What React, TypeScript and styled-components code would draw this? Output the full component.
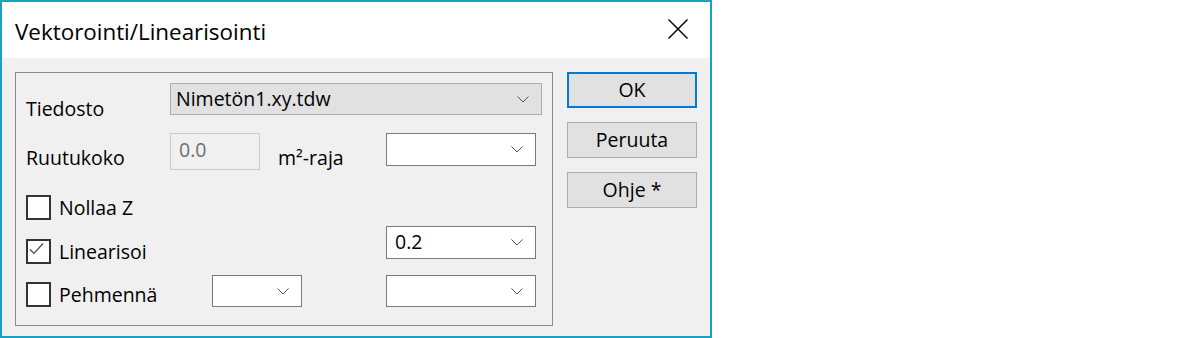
import React from "react";
import styled, { createGlobalStyle, css } from "styled-components";

const FONT = `"Segoe UI", "Open Sans", sans-serif`;

const Global = createGlobalStyle`
  html, body { margin: 0; padding: 0; background: #ffffff; }
  body { font-family: ${FONT}; }
  * { box-sizing: border-box; }
`;

const Window = styled.div`
  width: 712px;
  height: 338px;
  border: 2px solid #1ba1c4;
  display: flex;
  flex-direction: column;
  background: #f0f0f0;
  font-family: ${FONT};
  font-size: 19.5px;
  color: #000;
`;

const TitleBar = styled.div`
  flex: none;
  height: 56px;
  background: #ffffff;
  display: flex;
  align-items: flex-start;
  padding: 0 22px 0 13px;
`;

const Title = styled.div`
  margin-top: 15px;
  line-height: 30px;
  font-size: 22.4px;
  white-space: nowrap;
`;

const CloseButton = styled.div`
  margin-left: auto;
  margin-top: 17px;
  width: 20px;
  height: 20px;
  display: flex;
`;

const Body = styled.div`
  flex: 1;
  display: flex;
  align-items: flex-start;
  padding: 14px 0 0 13px;
`;

const GroupBox = styled.div`
  width: 538px;
  height: 254px;
  border: 1px solid #8c8c8c;
  padding: 10px 0 0 10px;
  display: flex;
  flex-direction: column;
`;

const Row = styled.div<{ $h: number }>`
  height: ${(p) => p.$h}px;
  display: flex;
  align-items: flex-start;
`;

const Label = styled.div<{ $w?: number; $dy?: number; $ml?: number }>`
  width: ${(p) => (p.$w ? `${p.$w}px` : "auto")};
  margin-top: ${(p) => p.$dy ?? 0}px;
  margin-left: ${(p) => p.$ml ?? 0}px;
  line-height: 26px;
  white-space: nowrap;
`;

const ComboBox = styled.div<{
  $w: number;
  $h: number;
  $ml?: number;
  $padL?: number;
  $readonly?: boolean;
}>`
  width: ${(p) => p.$w}px;
  height: ${(p) => p.$h}px;
  margin-left: ${(p) => p.$ml ?? 0}px;
  display: flex;
  align-items: center;
  padding: 0 12px 0 ${(p) => p.$padL ?? 8}px;
  ${(p) =>
    p.$readonly
      ? css`
          background: #e1e1e1;
          border: 1px solid #adadad;
        `
      : css`
          background: #ffffff;
          border: 1px solid #7a7a7a;
        `}
`;

const ComboText = styled.span`
  flex: 1;
  line-height: 26px;
  white-space: nowrap;
`;

const Chevron = styled.svg`
  flex: none;
  width: 12px;
  height: 7px;
`;

const EditBox = styled.div<{ $w: number; $h: number }>`
  width: ${(p) => p.$w}px;
  height: ${(p) => p.$h}px;
  border: 1px solid #cccccc;
  background: #f0f0f0;
  color: #6d6d6d;
  padding: 3px 0 0 8px;
  line-height: 26px;
`;

const CheckItem = styled.div<{ $w: number; $dy: number }>`
  width: ${(p) => p.$w}px;
  margin-top: ${(p) => p.$dy}px;
  display: flex;
  align-items: flex-start;
  gap: 8px;
`;

const CheckBox = styled.div`
  flex: none;
  width: 25px;
  height: 25px;
  border: 2px solid #333333;
  background: #ffffff;
  display: flex;
`;

const CheckLabel = styled.span`
  line-height: 26px;
  white-space: nowrap;
`;

const ButtonColumn = styled.div`
  margin-left: 14px;
  width: 130px;
  display: flex;
  flex-direction: column;
  gap: 14px;
`;

const Button = styled.div<{ $default?: boolean }>`
  height: 36px;
  background: #e1e1e1;
  border: ${(p) => (p.$default ? "2px solid #0078d7" : "1px solid #adadad")};
  display: flex;
  align-items: center;
  justify-content: center;
  line-height: 26px;
`;

function Arrow() {
  return (
    <Chevron viewBox="0 0 12 7">
      <polyline
        points="0.5,0.5 6,6 11.5,0.5"
        fill="none"
        stroke="#555555"
        strokeWidth="1"
      />
    </Chevron>
  );
}

function Combo(props: {
  w: number;
  h: number;
  ml?: number;
  padL?: number;
  readonly?: boolean;
  value?: string;
}) {
  return (
    <ComboBox
      $w={props.w}
      $h={props.h}
      $ml={props.ml}
      $padL={props.padL}
      $readonly={props.readonly}
    >
      <ComboText>{props.value ?? ""}</ComboText>
      <Arrow />
    </ComboBox>
  );
}

function Check(props: { label: string; checked?: boolean; w: number; dy: number }) {
  return (
    <CheckItem $w={props.w} $dy={props.dy}>
      <CheckBox>
        {props.checked && (
          <svg width="21" height="21" viewBox="0 0 21 21">
            <polyline
              points="2,8.5 6,12.5 15,2.5"
              fill="none"
              stroke="#444444"
              strokeWidth="1.2"
            />
          </svg>
        )}
      </CheckBox>
      <CheckLabel>{props.label}</CheckLabel>
    </CheckItem>
  );
}

export default function App() {
  return (
    <>
      <Global />
      <Window>
        <TitleBar>
          <Title>Vektorointi/Linearisointi</Title>
          <CloseButton>
            <svg width="20" height="20" viewBox="0 0 20 20">
              <line x1="0.5" y1="0.5" x2="19.5" y2="19.5" stroke="#000" strokeWidth="1.4" />
              <line x1="19.5" y1="0.5" x2="0.5" y2="19.5" stroke="#000" strokeWidth="1.4" />
            </svg>
          </CloseButton>
        </TitleBar>
        <Body>
          <GroupBox>
            <Row $h={50}>
              <Label $w={144} $dy={13}>Tiedosto</Label>
              <Combo w={372} h={32} padL={5} readonly value="Nimetön1.xy.tdw" />
            </Row>
            <Row $h={50}>
              <Label $w={144} $dy={12}>Ruutukoko</Label>
              <EditBox $w={90} $h={37}>0.0</EditBox>
              <Label $w={108} $ml={18} $dy={12}>m²-raja</Label>
              <Combo w={150} h={33} />
            </Row>
            <Row $h={44}>
              <Check label="Nollaa Z" w={360} dy={13} />
            </Row>
            <Row $h={50}>
              <Check label="Linearisoi" w={360} dy={13} checked />
              <Combo w={150} h={33} value="0.2" />
            </Row>
            <Row $h={50}>
              <Check label="Pehmennä" w={186} dy={7} />
              <Combo w={90} h={32} />
              <Combo w={150} h={32} ml={84} />
            </Row>
          </GroupBox>
          <ButtonColumn>
            <Button $default>OK</Button>
            <Button>Peruuta</Button>
            <Button>Ohje *</Button>
          </ButtonColumn>
        </Body>
      </Window>
    </>
  );
}
